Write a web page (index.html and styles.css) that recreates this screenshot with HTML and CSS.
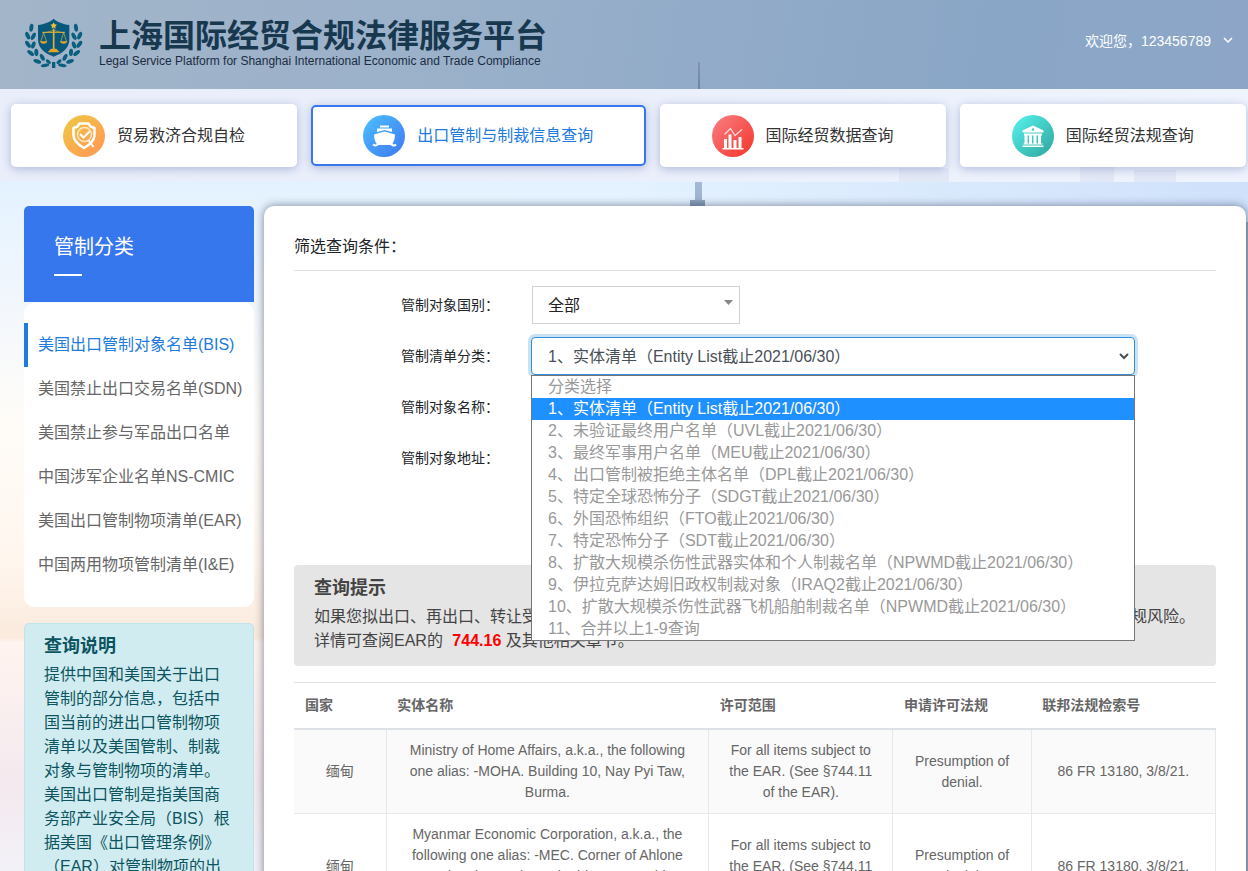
FILE: index.html
```html
<!DOCTYPE html>
<html lang="zh-CN">
  <head>
    <meta charset="utf-8">
    <meta name="viewport" content="width=device-width, initial-scale=1">
    <title>上海国际经贸合规法律服务平台</title>
    <link rel="stylesheet" href="styles.css">
  </head>
  <body>

  <header class="header">
    <a class="brand" href="#">
      <svg class="brand-logo" viewBox="0 0 174 150" aria-hidden="true">
        <defs>
          <g id="branch" fill="#0b5f7e">
            <ellipse cx="19" cy="29" rx="6" ry="12" transform="rotate(8 19 29)"/>
            <ellipse cx="8" cy="53" rx="6" ry="12" transform="rotate(-24 8 53)"/>
            <ellipse cx="25" cy="55" rx="6" ry="12" transform="rotate(28 25 55)"/>
            <ellipse cx="9" cy="79" rx="6" ry="12" transform="rotate(-36 9 79)"/>
            <ellipse cx="25" cy="81" rx="6" ry="11" transform="rotate(18 25 81)"/>
            <ellipse cx="17" cy="105" rx="6" ry="12" transform="rotate(-52 17 105)"/>
            <ellipse cx="34" cy="103" rx="6" ry="11" transform="rotate(-4 34 103)"/>
            <ellipse cx="37" cy="130" rx="6" ry="12" transform="rotate(-70 37 130)"/>
            <ellipse cx="52" cy="118" rx="6" ry="11" transform="rotate(-28 52 118)"/>
            <ellipse cx="60" cy="142" rx="5" ry="13" transform="rotate(80 60 142)"/>
            <ellipse cx="70" cy="131" rx="5" ry="9" transform="rotate(-50 70 131)"/>
          </g>
        </defs>
        <use href="#branch"/>
        <use href="#branch" transform="matrix(-1 0 0 1 172 0)"/>
        <path d="M81 132h10v18H81z" fill="#0b5f7e"/>
        <path d="M86 2c10 10 28 16 47 19v43c0 28-22 43-47 52-25-9-47-24-47-52V21C58 18 76 12 86 2z" fill="#07587c"/>
        <path d="M86 13l3 6 7 1-5 5 1 7-6-4-6 4 1-7-5-5 7-1z" fill="#f2c230"/>
        <g fill="none" stroke="#e3b03a" stroke-width="3">
          <path d="M86 32v64" stroke-width="5"/>
          <path d="M56 44c12 0 20-6 30-6s18 6 30 6M56 44l-9 28M56 44l9 28M116 44l-9 28M116 44l9 28" stroke-width="2"/>
          <path d="M52 43h68"/>
        </g>
        <path d="M45 70h22c-2 10-20 10-22 0zM105 70h22c-2 10-20 10-22 0zM78 92h16l10 11H68z" fill="#e3a428"/>
      </svg>
      <span class="brand-text">
        <strong class="brand-name">上海国际经贸合规法律服务平台</strong>
        <span class="brand-sub">Legal Service Platform for Shanghai International Economic and Trade Compliance</span>
      </span>
    </a>
    <button class="user" type="button">
      欢迎您，123456789
      <svg class="user-arrow" viewBox="0 0 10 8" aria-hidden="true"><path d="M1 2l4 4 4-4" fill="none" stroke="#fff" stroke-width="1.5"/></svg>
    </button>
  </header>

  <nav class="tabs">
    <a class="tab" href="#">
      <svg class="tab-icon" viewBox="0 0 42 42" aria-hidden="true">
        <defs><linearGradient id="g1" x1="0" y1="0" x2="1" y2="1"><stop offset=".2" stop-color="#f2bf46"/><stop offset=".8" stop-color="#ff9f52"/></linearGradient></defs>
        <circle cx="21" cy="21" r="21" fill="url(#g1)"/>
        <path d="M21 33c-7-4-10.500-8-10.500-13v-7l4-1.500 2-3h9l2 3 4 1.500v7c0 5-3.500 9-10.500 13z" fill="none" stroke="#fff" stroke-width="2.500" stroke-linejoin="round"/>
        <circle cx="21.500" cy="19.500" r="7" fill="none" stroke="#fff" stroke-opacity=".7" stroke-width="1.500"/>
        <path d="M17 19l3.500 3.500 6-6" fill="none" stroke="#fff" stroke-width="2"/>
        <path d="M25.500 25l5 7" stroke="#fff" stroke-width="2"/>
      </svg>
      <span>贸易救济合规自检</span>
    </a>
    <a class="tab active" href="#">
      <svg class="tab-icon" viewBox="0 0 42 42" aria-hidden="true">
        <defs><linearGradient id="g2" x1="0" y1="0" x2="1" y2="1"><stop offset=".1" stop-color="#4ab9fe"/><stop offset=".9" stop-color="#407ff2"/></linearGradient></defs>
        <circle cx="21" cy="21" r="21" fill="url(#g2)"/>
        <path d="M17 10.500h9v2h-9zM14 13.500h15v3.500l-7.500-2-7.500 2z" fill="#fff"/>
        <path d="M21.500 16.500L32 19.500c0 4-1 7-3 10h-15c-2-3-3-6-3-10z" fill="#fff"/>
        <path d="M10 29.500c2 1.500 4 1 5-.5h13c1.500 1.500 3.500 2 5 .5" fill="none" stroke="#fff" stroke-width="2"/>
      </svg>
      <span>出口管制与制裁信息查询</span>
    </a>
    <a class="tab" href="#">
      <svg class="tab-icon" viewBox="0 0 42 42" aria-hidden="true">
        <defs><linearGradient id="g3" x1="0" y1="0" x2="1" y2="1"><stop offset=".1" stop-color="#f9787b"/><stop offset=".9" stop-color="#f43b31"/></linearGradient></defs>
        <circle cx="21" cy="21" r="21" fill="url(#g3)"/>
        <path d="M12 24h3v9h-3zM16.500 19.500h3V33h-3zM21.500 25h3v8h-3zM26.500 22h3v11h-3zM10.500 33h21v1.500h-21z" fill="#fff"/>
        <path d="M12.500 19.500l6-6 4.500 7 7-6" fill="none" stroke="#fff" stroke-opacity=".8" stroke-width="1.300"/>
      </svg>
      <span>国际经贸数据查询</span>
    </a>
    <a class="tab" href="#">
      <svg class="tab-icon" viewBox="0 0 42 42" aria-hidden="true">
        <defs><linearGradient id="g4" x1="0" y1="0" x2="1" y2="1"><stop offset=".1" stop-color="#53ece6"/><stop offset=".9" stop-color="#32aca4"/></linearGradient></defs>
        <circle cx="21" cy="21" r="21" fill="url(#g4)"/>
        <path d="M21 10.500l10.500 5v2h-21v-2z" fill="#fff"/>
        <circle cx="21" cy="14.500" r="1.200" fill="#40cbc4"/>
        <path d="M12 18.500h18v2H12zM12.500 20h3v9h-3zM17 20h3v9h-3zM21.500 20h3v9h-3zM26 20h3v9h-3zM11.500 28.500h19v1h-19zM10.500 30.500h21v1.500h-21z" fill="#fff"/>
      </svg>
      <span>国际经贸法规查询</span>
    </a>
  </nav>

  <div class="page">
    <aside class="sidebar">
      <h2 class="sidebar-title">管制分类</h2>
      <ul class="menu">
        <li><a class="menu-link active" href="#">美国出口管制对象名单(BIS)</a></li>
        <li><a class="menu-link" href="#">美国禁止出口交易名单(SDN)</a></li>
        <li><a class="menu-link" href="#">美国禁止参与军品出口名单</a></li>
        <li><a class="menu-link" href="#">中国涉军企业名单NS-CMIC</a></li>
        <li><a class="menu-link" href="#">美国出口管制物项清单(EAR)</a></li>
        <li><a class="menu-link" href="#">中国两用物项管制清单(I&amp;E)</a></li>
      </ul>
      <section class="note">
        <h3>查询说明</h3>
        <p>提供中国和美国关于出口管制的部分信息，包括中国当前的进出口管制物项清单以及美国管制、制裁对象与管制物项的清单。</p>
        <p>美国出口管制是指美国商务部产业安全局（BIS）根据美国《出口管理条例》（EAR）对管制物项的出口、再出口和转让实施的管制。</p>
      </section>
    </aside>

    <main class="content">
      <h2 class="content-title">筛选查询条件：</h2>

      <form class="filter">
        <div class="row">
          <label for="country">管制对象国别：</label>
          <div class="field field-small">
            <select id="country">
              <option>全部</option>
            </select>
            <svg class="arrow-fill" viewBox="0 0 9 5" aria-hidden="true"><path d="M0 0h9L4.500 5z" fill="#888"/></svg>
          </div>
        </div>
        <div class="row">
          <label for="category">管制清单分类：</label>
          <div class="field">
            <select id="category" class="open">
              <option>1、实体清单（Entity List截止2021/06/30）</option>
            </select>
            <svg class="arrow-line" viewBox="0 0 10 8" aria-hidden="true"><path d="M1 2l4 4 4-4" fill="none" stroke="#495057" stroke-width="2"/></svg>
            <ul class="options" role="listbox" aria-label="管制清单分类">
              <li role="option">分类选择</li>
              <li role="option" class="selected" aria-selected="true">1、实体清单（Entity List截止2021/06/30）</li>
              <li role="option">2、未验证最终用户名单（UVL截止2021/06/30）</li>
              <li role="option">3、最终军事用户名单（MEU截止2021/06/30）</li>
              <li role="option">4、出口管制被拒绝主体名单（DPL截止2021/06/30）</li>
              <li role="option">5、特定全球恐怖分子（SDGT截止2021/06/30）</li>
              <li role="option">6、外国恐怖组织（FTO截止2021/06/30）</li>
              <li role="option">7、特定恐怖分子（SDT截止2021/06/30）</li>
              <li role="option">8、扩散大规模杀伤性武器实体和个人制裁名单（NPWMD截止2021/06/30）</li>
              <li role="option">9、伊拉克萨达姆旧政权制裁对象（IRAQ2截止2021/06/30）</li>
              <li role="option">10、扩散大规模杀伤性武器飞机船舶制裁名单（NPWMD截止2021/06/30）</li>
              <li role="option">11、合并以上1-9查询</li>
            </ul>
          </div>
        </div>
        <div class="row">
          <label for="name">管制对象名称：</label>
          <div class="field"><input id="name" type="text"></div>
        </div>
        <div class="row">
          <label for="address">管制对象地址：</label>
          <div class="field"><input id="address" type="text"></div>
        </div>
      </form>

      <section class="tips">
        <h3>查询提示</h3>
        <p>如果您拟出口、再出口、转让受EAR管辖的物项给实体清单上的实体，须事先申请获得许可证，否则可能面临出口合规风险。</p>
        <p>详情可查阅EAR的 <a href="#">744.16</a> 及其他相关章节。</p>
      </section>

      <table class="result">
        <colgroup>
          <col class="col-country">
          <col class="col-name">
          <col class="col-scope">
          <col class="col-policy">
          <col class="col-code">
        </colgroup>
        <thead>
          <tr>
            <th>国家</th>
            <th>实体名称</th>
            <th>许可范围</th>
            <th>申请许可法规</th>
            <th>联邦法规检索号</th>
          </tr>
        </thead>
        <tbody>
          <tr>
            <td>缅甸</td>
            <td>Ministry of Home Affairs, a.k.a., the following one alias: -MOHA. Building 10, Nay Pyi Taw, Burma.</td>
            <td>For all items subject to the EAR. (See §744.11 of the EAR).</td>
            <td>Presumption of denial.</td>
            <td>86 FR 13180, 3/8/21.</td>
          </tr>
          <tr>
            <td>缅甸</td>
            <td>Myanmar Economic Corporation, a.k.a., the following one alias: -MEC. Corner of Ahlone Road and Strand Road, Ahlone Township, Yangon, Burma.</td>
            <td>For all items subject to the EAR. (See §744.11 of the EAR).</td>
            <td>Presumption of denial.</td>
            <td>86 FR 13180, 3/8/21.</td>
          </tr>
        </tbody>
      </table>
    </main>
  </div>

  </body>
</html>
```
FILE: styles.css
```css
* {
  box-sizing: border-box;
}

html {
  scrollbar-width: none;
}

body {
  margin: 0;
  font-family: "Liberation Sans", "Noto Sans CJK SC", sans-serif;
  font-size: 16px;
  line-height: 24px;
  color: #212529;
}

h2, h3, p, ul {
  margin: 0;
  padding: 0;
}

ul {
  list-style: none;
}

a {
  text-decoration: none;
}

/* header */
.header {
  display: flex;
  justify-content: space-between;
  align-items: center;
  height: 89px;
  padding: 0 15px 4px 25px;
  /* tip of the tower over the sky */
  background:
    linear-gradient(#8494ad, #70839d) 56% 100% / 2px 27px no-repeat,
    linear-gradient(100deg, #a2b5c9 0%, #9bb1ca 35%, #90aac8 60%, #8aa6c6 80%, #8da6c8 100%);
}

.brand {
  display: flex;
  align-items: center;
  gap: 16px;
  color: #17384f;
}

.brand-logo {
  width: 58px;
  height: 50px;
}

.brand-text {
  display: flex;
  flex-direction: column;
}

.brand-name {
  font-size: 32px;
  line-height: 36px;
}

.brand-sub {
  font-size: 12px;
  line-height: 14px;
  color: #1b2c42;
}

.user {
  display: flex;
  align-items: center;
  gap: 12px;
  padding: 0 0 5px;
  border: 0;
  background: none;
  font-family: inherit;
  font-size: 14px;
  color: #fff;
}

.user-arrow {
  width: 10px;
  height: 8px;
}

/* top tabs */
.tabs {
  display: flex;
  align-items: center;
  gap: 14px;
  padding: 15px 2px 15px 11px;
  /* pale skyline along the bottom edge */
  background:
    linear-gradient(#e3e8f6, #e3e8f6) 75% 100% / 50px 14px no-repeat,
    linear-gradient(#e3e8f6, #e3e8f6) 89% 100% / 34px 18px no-repeat,
    linear-gradient(#e3e8f6, #e3e8f6) 94% 100% / 42px 12px no-repeat,
    linear-gradient(90deg, #eaeefa, #ebeffb 50%, #eff3fd);
}

.tab {
  display: flex;
  flex: 1 1 auto;
  align-items: center;
  justify-content: center;
  gap: 12px;
  height: 63px;
  border: 2px solid #fff;
  border-radius: 5px;
  background: #fff;
  box-shadow: 0 2px 10px rgba(80, 105, 170, 0.4);
  color: #333;
  white-space: nowrap;
}

.tab.active {
  height: 61px;
  border-color: #3777ee;
  color: #217bde;
}

.tab-icon {
  width: 42px;
  height: 42px;
}

/* page */
.page {
  display: flex;
  align-items: flex-start;
  gap: 10px;
  padding: 24px 2px 24px 24px;
  background:
    linear-gradient(#8ca2bd, #8298b2) 56% 18px / 15px 6px no-repeat,
    linear-gradient(#a3b9d5, #9bb0cb) 56% 0 / 7px 24px no-repeat,
    linear-gradient(90deg, rgba(140, 155, 185, 0) 80%, rgba(140, 155, 185, 0.8)) 0 40px no-repeat,
    linear-gradient(90deg, rgba(203, 223, 251, 0) 50%, #cfe1fb) 0 0 / 100% 60px no-repeat,
    linear-gradient(#e3f2ff 0, #f0f6fd 100px, #fffcf8 240px, #fff6ee 380px, #fbeadd 455px, #fff4ef 460px, #f4e9ee 600px, #f2f2f9 700px);
}

.sidebar {
  flex: 0 0 230px;
}

.sidebar-title {
  padding: 26px 30px;
  margin-bottom: 1px;
  border-radius: 5px 5px 0 0;
  background: #3777ee;
  color: #fff;
  font-size: 20px;
  font-weight: normal;
  line-height: 30px;
}

.sidebar-title::after {
  content: "";
  display: block;
  width: 28px;
  height: 2px;
  margin: 12px 0 0;
  background: #fff;
}

.menu {
  padding: 20px 0;
  border-radius: 10px;
  background: #fff;
}

.menu-link {
  display: block;
  padding-left: 10px;
  border-left: 4px solid transparent;
  line-height: 44px;
  color: #666;
  white-space: nowrap;
}

.menu-link.active {
  border-color: #217bde;
  color: #217bde;
}

.note {
  margin-top: 16px;
  padding: 7px 19px;
  border: 1px solid #bee5eb;
  border-radius: 5px;
  background: #d1ecf1;
  color: #0c5460;
}

.note h3,
.tips h3 {
  margin-bottom: 2px;
  font-size: 18px;
  line-height: 30px;
}

/* content card */
.content {
  flex: 1;
  min-width: 0;
  padding: 28px 30px;
  border-radius: 10px;
  background: #fff;
  box-shadow: 0 0 10px rgba(40, 55, 80, 0.6);
}

.content-title {
  padding-bottom: 10px;
  border-bottom: 1px solid #dee2e6;
  font-size: 16px;
  font-weight: normal;
  line-height: 26px;
}

.filter {
  display: grid;
  gap: 13px;
  padding: 15px 81px 0 107px;
  margin-bottom: 88px;
}

.row {
  display: flex;
  align-items: center;
}

.row label {
  flex: 0 0 130px;
  font-size: 14px;
}

.field {
  position: relative;
  flex: 1;
}

.field-small {
  flex: 0 0 210px;
  padding: 0 1px;
}

.field select,
.field input {
  display: block;
  width: 100%;
  height: 38px;
  padding: 0 16px;
  border: 1px solid #ced4da;
  border-radius: 0;
  background: #fff;
  color: #495057;
  font-family: inherit;
  font-size: 16px;
  appearance: none;
}

.field-small select {
  padding: 0 15px;
  color: #222;
}

.field select.open {
  border-color: #3490dc;
  border-radius: 4px;
  box-shadow: 0 0 0 3px #c9e3f5;
}

.arrow-fill,
.arrow-line {
  position: absolute;
  pointer-events: none;
}

.arrow-fill {
  top: 14px;
  right: 8px;
  width: 9px;
  height: 5px;
}

.arrow-line {
  top: 15px;
  right: 6px;
  width: 10px;
  height: 8px;
}

.options {
  position: absolute;
  top: 100%;
  left: 0;
  right: 0;
  z-index: 10;
  border: 1px solid #767676;
  background: #fff;
}

.options li {
  padding: 0 16px;
  line-height: 22px;
  color: #999;
  white-space: nowrap;
}

.options .selected {
  background: #1e90ff;
  color: #fff;
}

.tips {
  padding: 8px 20px 13px;
  margin-bottom: 16px;
  border-radius: 4px;
  background: #e5e5e5;
  color: #444;
}

.tips a {
  margin-left: 5px;
  color: #f00;
  font-weight: bold;
}

/* result table */
.result {
  width: 100%;
  border-collapse: collapse;
  table-layout: fixed;
  color: #666;
  font-size: 14px;
  line-height: 21px;
}

.col-country {
  width: 10%;
}

.col-name {
  width: 35%;
}

.col-scope,
.col-code {
  width: 20%;
}

.col-policy {
  width: 15%;
}

.result th {
  padding: 12px 11px;
  border-top: 1px solid #dee2e6;
  border-bottom: 2px solid #dee2e6;
  text-align: left;
}

.result td {
  padding: 10px 18px;
  border: 1px solid #e6e8ea;
  border-left: 0;
  text-align: center;
}

.result tbody tr:nth-child(odd) {
  background: #fafafa;
}
```
